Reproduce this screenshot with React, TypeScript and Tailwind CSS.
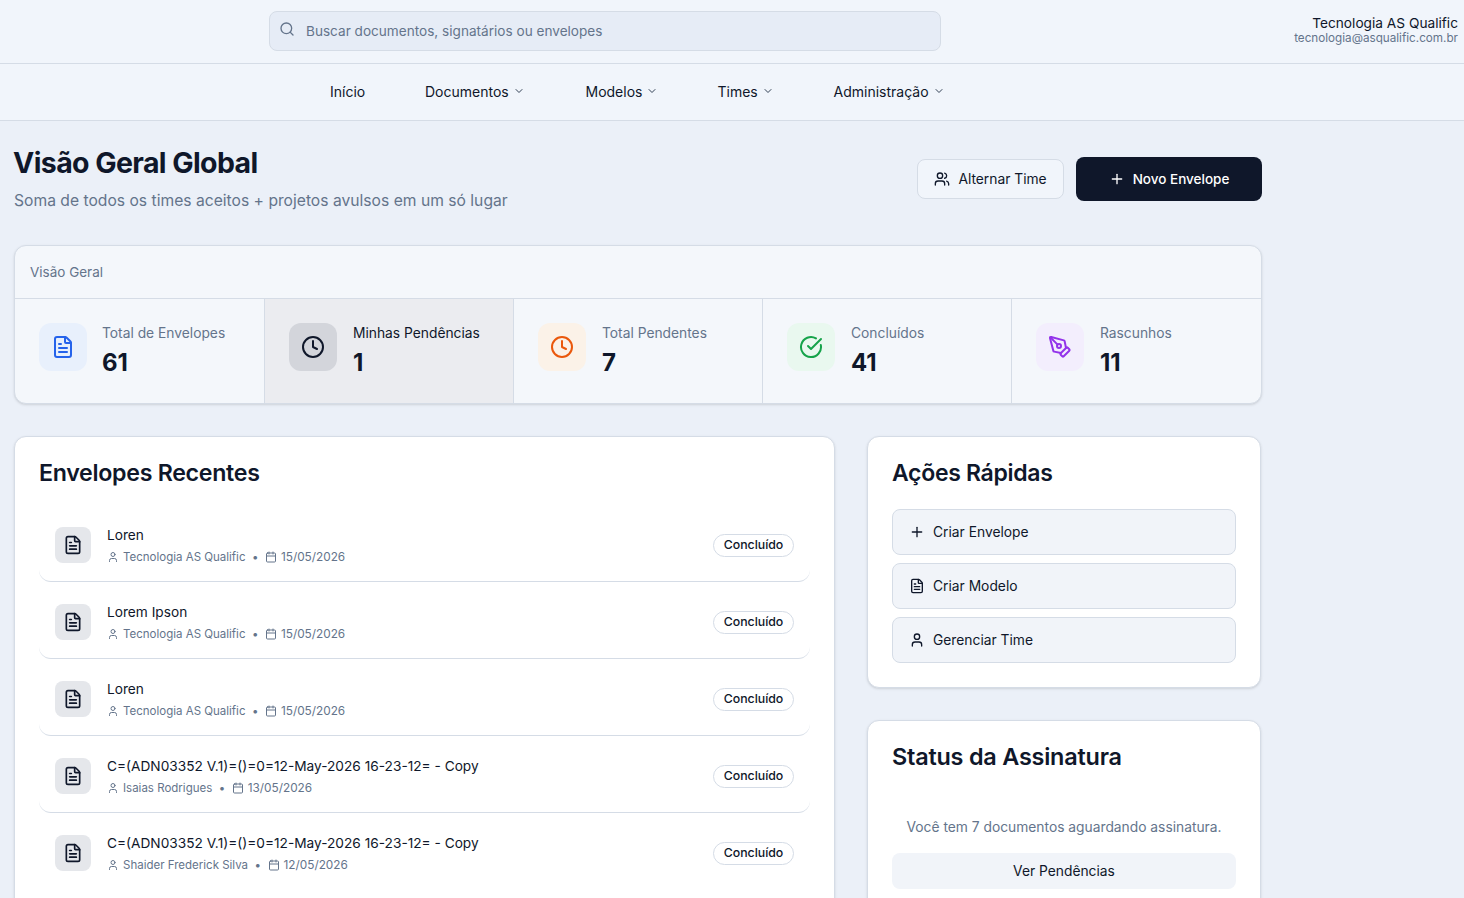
import { Search, ChevronDown, Users, Plus, FileText, Clock, CircleCheckBig, PenTool, User, Calendar } from 'lucide-react';

const navItems = [
  { label: 'Início', caret: false, cls: 'w-[95px]' },
  { label: 'Documentos', caret: true, cls: 'w-[160.5px]' },
  { label: 'Modelos', caret: true, cls: 'w-[132px]' },
  { label: 'Times', caret: true, cls: 'w-[116px]' },
  { label: 'Administração', caret: true, cls: '' },
];

const stats = [
  { label: 'Total de Envelopes', value: '61', Icon: FileText, box: 'bg-[#e8f0fc]', color: 'text-[#2563eb]' },
  { label: 'Minhas Pendências', value: '1', Icon: Clock, box: 'bg-[#d3d5db]', color: 'text-[#0f172a]', active: true },
  { label: 'Total Pendentes', value: '7', Icon: Clock, box: 'bg-[#fbf2e8]', color: 'text-[#ea580c]' },
  { label: 'Concluídos', value: '41', Icon: CircleCheckBig, box: 'bg-[#e9f8ef]', color: 'text-[#16a34a]' },
  { label: 'Rascunhos', value: '11', Icon: PenTool, box: 'bg-[#f3eefd]', color: 'text-[#9333ea]' },
];

const envelopes = [
  { title: 'Loren', owner: 'Tecnologia AS Qualific', date: '15/05/2026' },
  { title: 'Lorem Ipson', owner: 'Tecnologia AS Qualific', date: '15/05/2026' },
  { title: 'Loren', owner: 'Tecnologia AS Qualific', date: '15/05/2026' },
  { title: 'C=(ADN03352 V.1)=()=0=12-May-2026 16-23-12= - Copy', owner: 'Isaias Rodrigues', date: '13/05/2026' },
  { title: 'C=(ADN03352 V.1)=()=0=12-May-2026 16-23-12= - Copy', owner: 'Shaider Frederick Silva', date: '12/05/2026' },
];

const quickActions = [
  { label: 'Criar Envelope', Icon: Plus },
  { label: 'Criar Modelo', Icon: FileText },
  { label: 'Gerenciar Time', Icon: User },
];

export default function App() {
  return (
    <div className="h-screen overflow-hidden bg-[#ebf0f8] font-['Inter',sans-serif] text-[#0f172a]">
      <header className="flex h-16 items-center justify-between border-b border-[#d5dce6] bg-[#f1f5fb] pb-px pl-[269px] pr-[6px]">
        <div className="flex h-10 w-[672px] items-center gap-[11px] rounded-lg border border-[#d5dce6] bg-[#e6ecf6] pl-[9px]">
          <Search className="mb-[4px] h-4 w-4 text-[#64748b]" />
          <span className="mt-px text-[13.6px] text-[#64748b]">Buscar documentos, signatários ou envelopes</span>
        </div>
        <div className="mb-[3px] text-right">
          <p className="text-[13.7px] leading-4 text-[#0f172a]">Tecnologia AS Qualific</p>
          <p className="text-[11.7px] leading-[14px] text-[#64748b]">tecnologia@asqualific.com.br</p>
        </div>
      </header>

      <nav className="flex h-[57px] items-center border-b border-[#d5dce6] bg-[#f1f5fb] pb-[2px] pl-[330px]">
        {navItems.map((item) => (
          <div key={item.label} className={`flex items-center gap-[4px] text-[14px] text-[#0f172a] ${item.cls}`}>
            {item.label}
            {item.caret && <ChevronDown className="h-3 w-3 text-[#334155]" />}
          </div>
        ))}
      </nav>

      <main className="w-[1262px] pl-[14px] pt-[24px]">
        <div className="flex items-start justify-between">
          <div>
            <h1 className="-ml-px text-[28.5px] font-bold leading-9 tracking-[-0.6px] text-[#0f172a]">Visão Geral Global</h1>
            <p className="mt-[8px] text-[15.66px] leading-6 text-[#64748b]">Soma de todos os times aceitos + projetos avulsos em um só lugar</p>
          </div>
          <div className="mt-3 flex items-center gap-3">
            <button className="flex h-10 w-[147px] items-center justify-center gap-2 rounded-lg border border-[#d5dce6] bg-[#f1f5fb] text-[13.8px] text-[#0f172a]">
              <Users className="h-4 w-4" />
              Alternar Time
            </button>
            <button className="flex h-11 w-[186px] items-center justify-center gap-2 rounded-lg bg-[#0f172a] text-[13.5px] font-medium text-white">
              <Plus className="h-4 w-4" />
              Novo Envelope
            </button>
          </div>
        </div>

        <section className="mt-[32px] overflow-hidden rounded-xl border border-[#d5dce6] bg-[#f4f7fb] shadow-sm">
          <div className="flex h-[53px] items-center border-b border-[#d5dce6] px-[15px] pt-px text-[13.5px] text-[#64748b]">Visão Geral</div>
          <div className="grid grid-cols-[250px_249px_249px_249px_1fr]">
            {stats.map(({ label, value, Icon, box, color, active }) => (
              <div key={label} className={`flex h-[104px] gap-[16px] border-r border-[#d5dce6] pl-6 pt-6 first:gap-[15px] last:border-r-0 ${active ? 'bg-[#ebecf0]' : ''}`}>
                <div className={`flex h-12 w-12 shrink-0 items-center justify-center rounded-xl ${box}`}>
                  <Icon className={`h-6 w-6 ${color}`} />
                </div>
                <div>
                  <p className={`text-[13.8px] leading-5 ${active ? 'text-[#0f172a]' : 'text-[#64748b]'}`}>{label}</p>
                  <p className="mt-1 text-[24px] font-bold leading-8 text-[#0f172a]">{value}</p>
                </div>
              </div>
            ))}
          </div>
        </section>

        <div className="mt-8 grid grid-cols-[821px_394px] gap-8">
          <section className="rounded-xl border border-[#d5dce6] bg-white px-6 pt-[23px] shadow-sm">
            <h2 className="text-[23.2px] font-semibold leading-[26px] tracking-[-0.3px] text-[#0f172a]">Envelopes Recentes</h2>
            <div className="mt-[19px]">
              {envelopes.map((env, i) => (
                <div key={i} className="flex h-[77px] items-center justify-between rounded-xl border-b border-[#d5dce6] pl-4 pr-[16px] pt-[4px] last:border-b-transparent">
                  <div className="flex items-center gap-4">
                    <div className="flex h-9 w-9 items-center justify-center rounded-lg bg-[#e5e7eb]">
                      <FileText className="h-5 w-5 text-[#0f172a]" />
                    </div>
                    <div>
                      <p className="text-[13.7px] leading-5 text-[#0f172a]">{env.title}</p>
                      <div className="mt-[4px] flex items-center text-[11.5px] leading-4 text-[#64748b]">
                        <User className="mr-[4px] h-3 w-3" />
                        {env.owner}
                        <span className="mx-[6.5px]">•</span>
                        <Calendar className="mr-[4px] h-3 w-3" />
                        <span className="text-[11.8px]">{env.date}</span>
                      </div>
                    </div>
                  </div>
                  <span className="flex h-[23px] w-[81px] items-center justify-center rounded-full border border-[#d5dce6] text-[12.3px] font-medium text-[#0f172a]">Concluído</span>
                </div>
              ))}
            </div>
          </section>

          <div className="flex flex-col gap-8">
            <section className="h-[252px] rounded-xl border border-[#d5dce6] bg-white px-6 pt-[23px] shadow-sm">
              <h2 className="text-[23px] font-semibold leading-[26px] tracking-[-0.3px] text-[#0f172a]">Ações Rápidas</h2>
              <div className="mt-[23px] flex flex-col gap-2">
                {quickActions.map(({ label, Icon }) => (
                  <button key={label} className="flex h-[46px] items-center gap-2 rounded-lg border border-[#d5dce6] bg-[#f1f4f9] px-4 text-[13.8px] text-[#0f172a]">
                    <Icon className="h-4 w-4" />
                    {label}
                  </button>
                ))}
              </div>
            </section>

            <section className="rounded-xl border border-[#d5dce6] bg-white px-6 pb-6 pt-[23px] shadow-sm">
              <h2 className="text-[23.4px] font-semibold leading-[26px] tracking-[-0.2px] text-[#0f172a]">Status da Assinatura</h2>
              <p className="mt-[47px] text-center text-[13.8px] leading-5 text-[#64748b]">Você tem 7 documentos aguardando assinatura.</p>
              <button className="mt-[16px] h-9 w-full rounded-lg bg-[#f1f4f9] text-[13.8px] text-[#0f172a]">Ver Pendências</button>
            </section>
          </div>
        </div>
      </main>
    </div>
  );
}
